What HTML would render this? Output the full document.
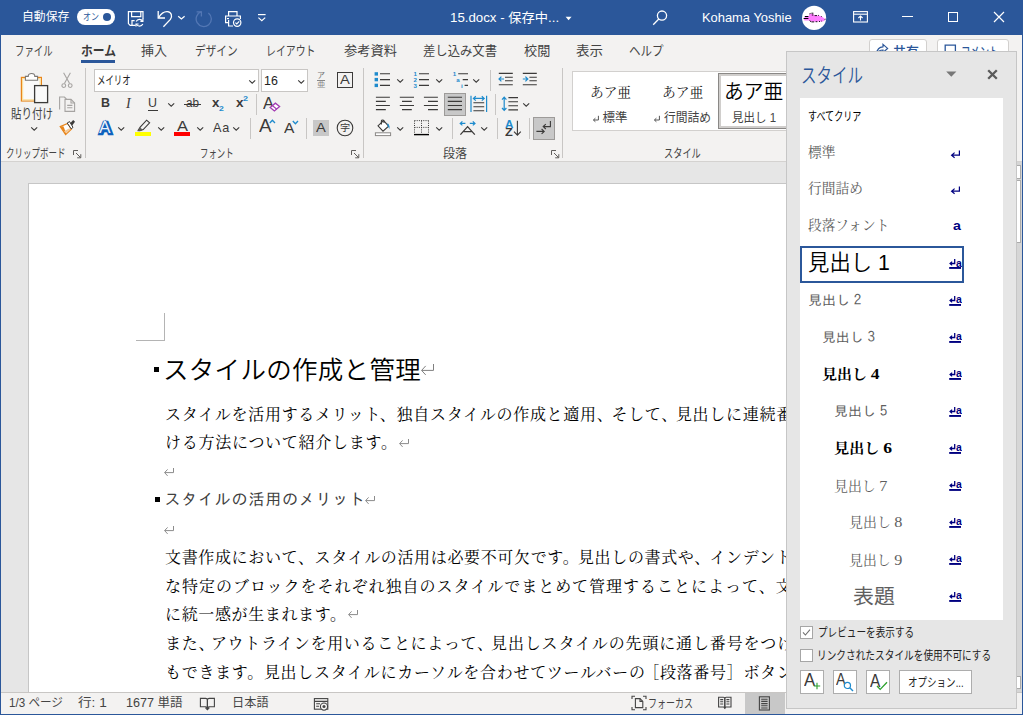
<!DOCTYPE html>
<html lang="ja"><head><meta charset="utf-8"><title>15.docx - Word</title><style>

html,body{margin:0;padding:0;}
body{width:1023px;height:715px;overflow:hidden;position:relative;background:#e6e6e6;font-family:'Liberation Sans','Noto Sans CJK JP',sans-serif;}
.a{position:absolute;display:block;}
.t{position:absolute;white-space:nowrap;transform-origin:0 50%;display:block;}
.dl{position:absolute;white-space:nowrap;display:block;}

</style></head><body>
<div class="a" style="left:0px;top:0px;width:1023px;height:35px;background:#2b579a;"></div>
<div class="a" style="left:0px;top:35px;width:1023px;height:127px;background:#f3f2f1;"></div>
<div class="a" style="left:0px;top:161px;width:1023px;height:1px;background:#d4d2d0;"></div>
<div class="a" style="left:0px;top:162px;width:1023px;height:530px;background:#e6e6e6;"></div>
<span class="t" style="left:22.1px;top:8.0px;height:18px;line-height:18px;font-size:12px;color:#fff;transform:scaleX(0.987);">自動保存</span>
<div class="a" style="left:77px;top:9px;width:38px;height:16px;background:#fff;border-radius:8px;"></div>
<span class="t" style="left:82.5px;top:10.0px;height:14px;line-height:14px;font-size:9.5px;color:#2b579a;transform:scaleX(0.841);">オン</span>
<div class="a" style="left:103px;top:13px;width:8px;height:8px;background:#2b579a;border-radius:50%;"></div>
<svg class="a" style="left:127px;top:10px;" width="18" height="17" viewBox="0 0 18 17"><g fill="none" stroke="#fff" stroke-width="1.2"><path d="M8.5 15.4H3.2L1.4 13.6V1.6H16V9"/><path d="M4.6 1.6V6.6H13.8V1.6"/><path d="M5 15.4V10.6H7.6"/><path d="M15.6 11.2A3.6 3.6 0 0 0 9.2 11.4M9.4 14.2A3.6 3.6 0 0 0 15.8 14"/><path d="M15.9 8.8V11.4H13.4M9 16.6V14H11.6"/></g></svg>
<svg class="a" style="left:156px;top:9px;" width="18" height="19" viewBox="0 0 18 19"><g fill="none" stroke="#fff" stroke-width="1.3"><path d="M2.2 2V9H9"/><path d="M2.6 8.6C5 4.6 8.4 2.4 11.4 2.6C15.6 3 16.6 7.4 14.4 10.4L7.4 17.8"/></g></svg>
<svg class="a" style="left:177px;top:15px;" width="9" height="5" viewBox="0 0 9 5"><path d="M1.2 1.2L4.4 4L7.6 1.2" fill="none" stroke="#fff" stroke-width="1.2"/></svg>
<svg class="a" style="left:195px;top:9px;" width="19" height="19" viewBox="0 0 19 19"><g fill="none" stroke="#5377b4" stroke-width="1.3"><path d="M6.35 2.7A7.6 7.6 0 1 0 13.4 3.9"/><path d="M1.6 2.8H6.4V7.6"/></g></svg>
<svg class="a" style="left:224px;top:10px;" width="19" height="18" viewBox="0 0 19 18"><g fill="none" stroke="#fff" stroke-width="1.2"><path d="M4.6 6V1.6H13V6"/><path d="M4.6 12.6H1.6V6H16.4V9"/><path d="M4.6 10V16H9"/><circle cx="13.2" cy="12.6" r="3.7"/><path d="M11.4 12.6L12.8 14L15.2 11.4"/></g><rect x="3" y="8" width="2" height="1.2" fill="#fff"/></svg>
<svg class="a" style="left:257px;top:13px;" width="10" height="9" viewBox="0 0 10 9"><path d="M1 1.6H8.6" stroke="#fff" stroke-width="1.2"/><path d="M1.4 4.6L4.8 7.6L8.2 4.6" fill="none" stroke="#fff" stroke-width="1.2"/></svg>
<span class="t" style="left:450.1px;top:8.0px;height:20px;line-height:20px;font-size:13px;color:#fff;transform:scaleX(1.021);">15.docx  -  保存中...</span>
<svg class="a" style="left:565px;top:16px;" width="8" height="5" viewBox="0 0 8 5"><path d="M0.6 0.8H6.6L3.6 4.2Z" fill="#fff"/></svg>
<svg class="a" style="left:652px;top:9px;" width="17" height="17" viewBox="0 0 17 17"><g fill="none" stroke="#fff" stroke-width="1.3"><circle cx="10" cy="6.6" r="4.6"/><path d="M6.8 10L1.2 15.8"/></g></svg>
<span class="t" style="left:701.9px;top:8.0px;height:20px;line-height:20px;font-size:13px;color:#fff;transform:scaleX(0.992);">Kohama Yoshie</span>
<svg class="a" style="left:801px;top:5px;" width="26" height="26" viewBox="0 0 26 26"><circle cx="13.1" cy="12.9" r="12.1" fill="#fff"/><path d="M2.8 14L4 11.4L7.6 11.2L8.6 9L12 8.6L13 10L20 11L24.6 14.2L22 16.4L10 16.8L8 15.6L3.4 15.6Z" fill="#ff80ff"/><path d="M3.8 11.5H7.4M2.6 13.5H7.4" stroke="#000" stroke-width="1.1"/><path d="M8.4 8.9L9.6 8.4M10.4 8.2H12.4M10.8 10H12.4M13.6 10.6H16M17 10.3L17.8 10.5M20 11L20.6 11.6M8.6 15.6L10 16.7M10.4 16.9H13.2M14.6 16.7H16.4M18 16.5H19M20 16.1H20.6M23.6 14.7L24.6 14.1" stroke="#000" stroke-width="0.9" fill="none"/></svg>
<svg class="a" style="left:853px;top:11px;" width="15" height="12" viewBox="0 0 15 12"><g fill="none" stroke="#fff" stroke-width="1.1"><rect x="0.6" y="0.6" width="13.8" height="10.4"/><path d="M0.6 3.2H14.4"/><path d="M7.5 9.6V5.2M5.4 7L7.5 5L9.6 7"/></g></svg>
<div class="a" style="left:902px;top:16px;width:10.5px;height:1.2px;background:#fff;"></div>
<div class="a" style="left:948px;top:12px;width:10px;height:10px;border:1.2px solid #fff;box-sizing:border-box;"></div>
<svg class="a" style="left:993px;top:11px;" width="12" height="12" viewBox="0 0 12 12"><path d="M1 1L11 11M11 1L1 11" stroke="#fff" stroke-width="1.2" fill="none"/></svg>
<span class="t" style="left:14.5px;top:41.0px;height:20px;line-height:20px;font-size:13px;color:#444;transform:scaleX(0.723);">ファイル</span>
<span class="t" style="left:80.5px;top:41.0px;height:20px;line-height:20px;font-size:13px;font-weight:700;color:#3b3a39;transform:scaleX(0.906);">ホーム</span>
<div class="a" style="left:81px;top:60px;width:34px;height:3px;background:#2b579a;"></div>
<span class="t" style="left:141.1px;top:41.0px;height:20px;line-height:20px;font-size:13px;color:#444;">挿入</span>
<span class="t" style="left:194.5px;top:41.0px;height:20px;line-height:20px;font-size:13px;color:#444;transform:scaleX(0.819);">デザイン</span>
<span class="t" style="left:266.1px;top:41.0px;height:20px;line-height:20px;font-size:13px;color:#444;transform:scaleX(0.760);">レイアウト</span>
<span class="t" style="left:343.5px;top:41.0px;height:20px;line-height:20px;font-size:13px;color:#444;transform:scaleX(1.019);">参考資料</span>
<span class="t" style="left:422.5px;top:41.0px;height:20px;line-height:20px;font-size:13px;color:#444;transform:scaleX(0.949);">差し込み文書</span>
<span class="t" style="left:523.5px;top:41.0px;height:20px;line-height:20px;font-size:13px;color:#444;transform:scaleX(1.011);">校閲</span>
<span class="t" style="left:576.1px;top:41.0px;height:20px;line-height:20px;font-size:13px;color:#444;transform:scaleX(1.038);">表示</span>
<span class="t" style="left:628.5px;top:41.0px;height:20px;line-height:20px;font-size:13px;color:#444;transform:scaleX(0.887);">ヘルプ</span>
<div class="a" style="left:869px;top:38.5px;width:58px;height:24px;background:#fff;border:1px solid #d2d0ce;border-radius:3px;box-sizing:border-box;"></div>
<svg class="a" style="left:875px;top:43px;" width="14" height="14" viewBox="0 0 14 14"><g fill="none" stroke="#2b579a" stroke-width="1.2"><path d="M8 1.4L12.6 5.4L8 9.4V7C5 7 3 8.2 1.6 10.6C2 6.6 4.4 4 8 3.8Z"/></g></svg>
<span class="t" style="left:892.5px;top:41.5px;height:20px;line-height:20px;font-size:13px;font-weight:500;color:#2b579a;transform:scaleX(0.992);">共有</span>
<div class="a" style="left:937px;top:38.5px;width:72px;height:24px;background:#fff;border:1px solid #d2d0ce;border-radius:3px;box-sizing:border-box;"></div>
<svg class="a" style="left:944px;top:44px;" width="13" height="13" viewBox="0 0 13 13"><path d="M1.2 1.2H11.4V9H5L2.6 11.2V9H1.2Z" fill="none" stroke="#2b579a" stroke-width="1.3"/></svg>
<span class="t" style="left:961.2px;top:41.5px;height:20px;line-height:20px;font-size:13px;font-weight:500;color:#2b579a;transform:scaleX(0.717);">コメント</span>
<svg class="a" style="left:20px;top:72px;" width="29" height="32" viewBox="0 0 29 32"><rect x="1.4" y="5.4" width="20" height="23.6" fill="#fafafa" stroke="#e8861c" stroke-width="1.2"/>
<rect x="2.6" y="6.6" width="17.6" height="21.2" fill="none" stroke="#fbe0a0" stroke-width="1.2"/>
<path d="M5.4 8.2V4.4H8.2C8.2 0.6 14.8 0.6 14.8 4.4H17.6V8.2Z" fill="#fff" stroke="#7a7876" stroke-width="1.1"/>
<rect x="14.6" y="13.6" width="13" height="17" fill="#fafafa" stroke="#3b3a39" stroke-width="1.3"/></svg>
<span class="t" style="left:11.0px;top:103.5px;height:20px;line-height:20px;font-size:13px;color:#444;transform:scaleX(0.809);">貼り付け</span>
<svg class="a" style="left:30px;top:126px;" width="9" height="6" viewBox="0 0 9 6"><path d="M1.2 1.4L4.2 4.2L7.2 1.4" fill="none" stroke="#3b3a39" stroke-width="1.1"/></svg>
<svg class="a" style="left:61px;top:72px;" width="12" height="17" viewBox="0 0 12 17"><g fill="none" stroke="#a6a4a2" stroke-width="1.1"><path d="M2.6 0.8L8.6 11.6M9.4 0.8L3.4 11.6"/><circle cx="2.8" cy="13.6" r="1.9"/><circle cx="9.2" cy="13.6" r="1.9"/></g></svg>
<svg class="a" style="left:58px;top:96px;" width="18" height="17" viewBox="0 0 18 17"><g fill="#f3f2f1" stroke="#a6a4a2" stroke-width="1.1"><path d="M1.6 13.6V1H6.4L8.4 3"/><path d="M7 3.4H13L16.6 7V15.4H7Z"/><path d="M13 3.4V7H16.6" fill="none"/><path d="M9.2 9.4H14.4M9.2 11.8H14.4" fill="none"/></g></svg>
<svg class="a" style="left:59px;top:119px;" width="17" height="17" viewBox="0 0 17 17"><path d="M1.2 7.6L8.6 4.4L12.4 10.2L6.6 15.6Z" fill="#fff" stroke="#e8861c" stroke-width="1.2"/><path d="M1.2 7.6L4.4 7.2L7.4 14.8L6.6 15.6Z" fill="#e8861c"/><path d="M5 12.2L10.4 9.2L11.2 10.6L7.2 14.2Z" fill="#f3c896"/>
<path d="M8.2 4L10.6 2.6L14 8.4L12.2 9.8Z" fill="#fff" stroke="#3b3a39" stroke-width="1"/><path d="M11.2 4.2L14.2 1L16 2.8L13.2 6.6Z" fill="#3b3a39"/></svg>
<span class="t" style="left:5.5px;top:145.0px;height:18px;line-height:18px;font-size:12px;color:#444;transform:scaleX(0.709);">クリップボード</span>
<svg class="a" style="left:73px;top:149.5px;" width="9" height="9" viewBox="0 0 9 9"><g fill="none" stroke="#605e5c" stroke-width="1"><path d="M0.5 5V0.5H5"/><path d="M3 3L7.6 7.6M7.8 4.2V7.8H4.2"/></g></svg>
<div class="a" style="left:85px;top:68px;width:1px;height:90px;background:#c8c6c4;"></div>
<div class="a" style="left:94px;top:69px;width:165px;height:23px;background:#fff;border:1px solid #c8c6c4;box-sizing:border-box;"></div>
<span class="t" style="left:97.0px;top:71.5px;height:18px;line-height:18px;font-size:12px;color:#222;transform:scaleX(0.698);">メイリオ</span>
<svg class="a" style="left:248px;top:79px;" width="9" height="6" viewBox="0 0 9 6"><path d="M1.2 1.4L4.2 4.2L7.2 1.4" fill="none" stroke="#3b3a39" stroke-width="1.1"/></svg>
<div class="a" style="left:261px;top:69px;width:47px;height:23px;background:#fff;border:1px solid #c8c6c4;box-sizing:border-box;"></div>
<span class="t" style="left:264.3px;top:70.5px;height:20px;line-height:20px;font-size:13px;color:#222;transform:scaleX(0.954);">16</span>
<svg class="a" style="left:297px;top:79px;" width="9" height="6" viewBox="0 0 9 6"><path d="M1.2 1.4L4.2 4.2L7.2 1.4" fill="none" stroke="#3b3a39" stroke-width="1.1"/></svg>
<span class="t" style="left:317.0px;top:70.5px;height:10px;line-height:10px;font-size:8px;color:#777;">ア</span>
<div class="a" style="left:317px;top:80.2px;width:8px;height:1px;background:#888;"></div>
<span class="t" style="left:316.8px;top:79.6px;height:10px;line-height:10px;font-size:8px;color:#888;transform:scaleX(1.050);">亜</span>
<div class="a" style="left:337px;top:72px;width:16px;height:16px;border:1.2px solid #3b3a39;box-sizing:border-box;"></div>
<span class="t" style="left:340.1px;top:70.2px;height:20px;line-height:20px;font-size:13px;color:#3b3a39;transform:scaleX(1.130);">A</span>
<span class="t" style="left:100.5px;top:93.0px;height:20px;line-height:20px;font-size:13.5px;font-weight:700;color:#3b3a39;transform:scaleX(0.923);">B</span>
<span class="t" style="left:126.0px;top:92.5px;height:21px;line-height:21px;font-size:14px;font-family:'Liberation Serif',serif;color:#3b3a39;font-style:italic;">I</span>
<span class="t" style="left:148.0px;top:92.6px;height:20px;line-height:20px;font-size:13px;color:#3b3a39;transform:scaleX(0.958);">U</span>
<div class="a" style="left:148px;top:109.6px;width:9.5px;height:1.1px;background:#3b3a39;"></div>
<svg class="a" style="left:167px;top:102px;" width="9" height="6" viewBox="0 0 9 6"><path d="M1.2 1.4L4.2 4.2L7.2 1.4" fill="none" stroke="#3b3a39" stroke-width="1.1"/></svg>
<span class="t" style="left:185.5px;top:93.9px;height:19px;line-height:19px;font-size:12.5px;color:#3b3a39;transform:scaleX(0.935);">ab</span>
<div class="a" style="left:184px;top:104px;width:16.5px;height:1px;background:#3b3a39;"></div>
<span class="t" style="left:212.1px;top:93.4px;height:20px;line-height:20px;font-size:13.5px;font-weight:700;color:#3b3a39;transform:scaleX(0.985);">x</span>
<span class="t" style="left:219.1px;top:103.9px;height:9px;line-height:9px;font-size:7.5px;font-weight:700;color:#1e8bcd;transform:scaleX(1.151);">2</span>
<span class="t" style="left:236.0px;top:93.4px;height:20px;line-height:20px;font-size:13.5px;font-weight:700;color:#3b3a39;">x</span>
<span class="t" style="left:242.9px;top:94.1px;height:9px;line-height:9px;font-size:7.5px;font-weight:700;color:#1e8bcd;transform:scaleX(1.199);">2</span>
<div class="a" style="left:255.6px;top:94px;width:1px;height:21px;background:#c8c6c4;"></div>
<span class="t" style="left:262.5px;top:91.6px;height:24px;line-height:24px;font-size:16px;color:#3b3a39;transform:scaleX(1.031);">A</span>
<svg class="a" style="left:269px;top:102px;" width="12" height="10" viewBox="0 0 12 10"><path d="M1.2 5.6L6.4 1.2L10.6 4.6L5.4 9Z" fill="#fff" stroke="#a33bb3" stroke-width="1.3"/><path d="M3.6 3.8L7.8 7.2" stroke="#a33bb3" stroke-width="1.1"/></svg>
<span class="t" style="left:98.5px;top:115.5px;height:25px;line-height:25px;font-size:16.5px;font-weight:700;color:#0f62bd;transform:scaleX(1.099);-webkit-text-stroke:2.6px #0f62bd;text-shadow:0 0 1.5px #6db3f2;">A</span>
<span class="t" style="left:99.3px;top:115.6px;height:24px;line-height:24px;font-size:16px;color:#fff;transform:scaleX(1.078);opacity:.92;">A</span>
<svg class="a" style="left:117px;top:126px;" width="9" height="6" viewBox="0 0 9 6"><path d="M1.2 1.4L4.2 4.2L7.2 1.4" fill="none" stroke="#3b3a39" stroke-width="1.1"/></svg>
<svg class="a" style="left:135px;top:119px;" width="17" height="13" viewBox="0 0 17 13"><path d="M3.2 11.4L5.2 8.2L11.6 1.2L14.6 3.8L8.2 10.6L5 11.8Z" fill="none" stroke="#3b3a39" stroke-width="1.1"/><path d="M2.4 12.2L5 8.4L8 10.8L4.4 12.2Z" fill="#605e5c"/></svg>
<div class="a" style="left:135px;top:132.3px;width:16px;height:3.6px;background:#ffff00;"></div>
<svg class="a" style="left:157px;top:126px;" width="9" height="6" viewBox="0 0 9 6"><path d="M1.2 1.4L4.2 4.2L7.2 1.4" fill="none" stroke="#3b3a39" stroke-width="1.1"/></svg>
<span class="t" style="left:176.5px;top:114.6px;height:22px;line-height:22px;font-size:14.5px;color:#3b3a39;transform:scaleX(1.137);">A</span>
<div class="a" style="left:174px;top:132.3px;width:16px;height:3.6px;background:#ff0000;"></div>
<svg class="a" style="left:196px;top:126px;" width="9" height="6" viewBox="0 0 9 6"><path d="M1.2 1.4L4.2 4.2L7.2 1.4" fill="none" stroke="#3b3a39" stroke-width="1.1"/></svg>
<span class="t" style="left:213.2px;top:118.0px;height:20px;line-height:20px;font-size:13.5px;color:#3b3a39;transform:scaleX(0.934);letter-spacing:1px;">Aa</span>
<svg class="a" style="left:232px;top:126px;" width="9" height="6" viewBox="0 0 9 6"><path d="M1.2 1.4L4.2 4.2L7.2 1.4" fill="none" stroke="#3b3a39" stroke-width="1.1"/></svg>
<div class="a" style="left:250.4px;top:118px;width:1px;height:21px;background:#c8c6c4;"></div>
<span class="t" style="left:258.5px;top:112.9px;height:27px;line-height:27px;font-size:18px;color:#3b3a39;transform:scaleX(1.049);">A</span>
<svg class="a" style="left:269px;top:119px;" width="7" height="5" viewBox="0 0 7 5"><path d="M0.8 4L3.4 1.2L6 4" fill="none" stroke="#1e8bcd" stroke-width="1.3"/></svg>
<span class="t" style="left:284.1px;top:116.6px;height:22px;line-height:22px;font-size:15px;color:#3b3a39;transform:scaleX(1.038);">A</span>
<svg class="a" style="left:292px;top:120px;" width="7" height="5" viewBox="0 0 7 5"><path d="M0.8 1L3.4 3.8L6 1" fill="none" stroke="#1e8bcd" stroke-width="1.3"/></svg>
<div class="a" style="left:305.5px;top:118px;width:1px;height:21px;background:#c8c6c4;"></div>
<div class="a" style="left:313px;top:120px;width:16px;height:16px;background:#c8c8c8;"></div>
<span class="t" style="left:316.1px;top:118.4px;height:20px;line-height:20px;font-size:13px;color:#3b3a39;transform:scaleX(1.130);">A</span>
<svg class="a" style="left:336px;top:119px;" width="18" height="18" viewBox="0 0 18 18"><circle cx="9" cy="9" r="7.8" fill="none" stroke="#3b3a39" stroke-width="1.1"/></svg>
<span class="t" style="left:339.9px;top:122.0px;height:12px;line-height:12px;font-size:9.5px;color:#3b3a39;transform:scaleX(1.072);">字</span>
<span class="t" style="left:199.9px;top:145.0px;height:18px;line-height:18px;font-size:12px;color:#444;transform:scaleX(0.700);">フォント</span>
<svg class="a" style="left:351px;top:149.5px;" width="9" height="9" viewBox="0 0 9 9"><g fill="none" stroke="#605e5c" stroke-width="1"><path d="M0.5 5V0.5H5"/><path d="M3 3L7.6 7.6M7.8 4.2V7.8H4.2"/></g></svg>
<div class="a" style="left:363px;top:68px;width:1px;height:90px;background:#c8c6c4;"></div>
<svg class="a" style="left:374px;top:72px;" width="17" height="16" viewBox="0 0 17 16"><path d="M6 1.8H16M6 7.6H16M6 13.4H16" stroke="#3b3a39" stroke-width="1.1"/><rect x="0.6" y="0.2" width="3.4" height="3.4" fill="#1e8bcd"/><rect x="0.6" y="5.9" width="3.4" height="3.4" fill="#1e8bcd"/><rect x="0.6" y="11.7" width="3.4" height="3.4" fill="#1e8bcd"/></svg>
<svg class="a" style="left:396px;top:78px;" width="9" height="6" viewBox="0 0 9 6"><path d="M1.2 1.4L4.2 4.2L7.2 1.4" fill="none" stroke="#3b3a39" stroke-width="1.1"/></svg>
<svg class="a" style="left:413px;top:71px;" width="17" height="18" viewBox="0 0 17 18"><path d="M6 2.8H16M6 8.6H16M6 14.4H16" stroke="#3b3a39" stroke-width="1.1"/><g font-family="Liberation Sans,sans-serif" font-weight="700" font-size="6.2" fill="#1e8bcd"><text x="0.6" y="5">1</text><text x="0.6" y="10.9">2</text><text x="0.6" y="16.8">3</text></g></svg>
<svg class="a" style="left:435px;top:78px;" width="9" height="6" viewBox="0 0 9 6"><path d="M1.2 1.4L4.2 4.2L7.2 1.4" fill="none" stroke="#3b3a39" stroke-width="1.1"/></svg>
<svg class="a" style="left:452px;top:71px;" width="17" height="18" viewBox="0 0 17 18"><path d="M6.2 2.8H16M10.7 8.6H16M12.6 14.4H16" stroke="#3b3a39" stroke-width="1.1"/><g font-family="Liberation Sans,sans-serif" font-weight="700" font-size="6.2" fill="#1e8bcd"><text x="0.8" y="5">1</text><text x="4.2" y="10.8">a</text><text x="9" y="16.8">i</text></g></svg>
<svg class="a" style="left:472px;top:78px;" width="9" height="6" viewBox="0 0 9 6"><path d="M1.2 1.4L4.2 4.2L7.2 1.4" fill="none" stroke="#3b3a39" stroke-width="1.1"/></svg>
<div class="a" style="left:490.3px;top:70px;width:1px;height:21px;background:#c8c6c4;"></div>
<svg class="a" style="left:498px;top:72px;" width="16" height="15" viewBox="0 0 16 15"><path d="M0.8 1.4H14.8M7 5.2H14.8M7 8.8H14.8M0.8 12.8H14.8" stroke="#3b3a39" stroke-width="1.1"/><path d="M6 7H1.2M3.4 4.6L1 7L3.4 9.4" fill="none" stroke="#1e8bcd" stroke-width="1.2"/></svg>
<svg class="a" style="left:522px;top:72px;" width="16" height="15" viewBox="0 0 16 15"><path d="M0.8 1.4H14.8M7.4 5.2H14.8M7.4 8.8H14.8M0.8 12.8H14.8" stroke="#3b3a39" stroke-width="1.1"/><path d="M0.8 7H5.6M3.4 4.6L5.8 7L3.4 9.4" fill="none" stroke="#1e8bcd" stroke-width="1.2"/></svg>
<svg class="a" style="left:375px;top:96px;" width="16" height="15" viewBox="0 0 16 15"><path d="M0.9 1.2H14.9M0.9 5.4H10.8M0.9 9.5H14.9M0.9 13.6H10.8" stroke="#3b3a39" stroke-width="1.1"/></svg>
<svg class="a" style="left:399px;top:96px;" width="16" height="15" viewBox="0 0 16 15"><path d="M0.8 1.2H15M3 5.4H12.8M0.8 9.5H15M3 13.6H12.8" stroke="#3b3a39" stroke-width="1.1"/></svg>
<svg class="a" style="left:423px;top:96px;" width="16" height="15" viewBox="0 0 16 15"><path d="M0.9 1.2H14.9M5 5.4H14.9M0.9 9.5H14.9M5 13.6H14.9" stroke="#3b3a39" stroke-width="1.1"/></svg>
<div class="a" style="left:444px;top:93px;width:22px;height:23px;background:#c8c8c8;border:1px solid #9d9b99;box-sizing:border-box;"></div>
<svg class="a" style="left:447px;top:96px;" width="16" height="15" viewBox="0 0 16 15"><path d="M0.8 1.2H15M0.8 5.4H15M0.8 9.5H15M0.8 13.6H15" stroke="#3b3a39" stroke-width="1.1"/></svg>
<svg class="a" style="left:470px;top:95px;" width="18" height="18" viewBox="0 0 18 18"><path d="M1 0.8V17M16.6 0.8V17" stroke="#1e8bcd" stroke-width="1.2"/><path d="M3.6 3.4H14M5.8 1.2L3.4 3.4L5.8 5.6M11.8 1.2L14.2 3.4L11.8 5.6" fill="none" stroke="#1e8bcd" stroke-width="1.2"/><path d="M3.4 7.8H14.2M3.4 11.8H14.2M3.4 15.8H14.2" stroke="#3b3a39" stroke-width="1.1"/></svg>
<div class="a" style="left:494.5px;top:94px;width:1px;height:21px;background:#c8c6c4;"></div>
<svg class="a" style="left:501px;top:96px;" width="18" height="16" viewBox="0 0 18 16"><path d="M7.4 1.6H17M7.4 5.7H17M7.4 9.8H17M7.4 13.9H17" stroke="#3b3a39" stroke-width="1.1"/><path d="M3.2 1.4V14.2M1 3.6L3.2 1.2L5.4 3.6M1 12L3.2 14.4L5.4 12" fill="none" stroke="#1e8bcd" stroke-width="1.2"/></svg>
<svg class="a" style="left:522px;top:102px;" width="9" height="6" viewBox="0 0 9 6"><path d="M1.2 1.4L4.2 4.2L7.2 1.4" fill="none" stroke="#3b3a39" stroke-width="1.1"/></svg>
<svg class="a" style="left:374px;top:119px;" width="18" height="18" viewBox="0 0 18 18"><path d="M4 6.8L9.6 1.6L14.6 7.2L9 12.2Z" fill="#fff" stroke="#3b3a39" stroke-width="1.1"/><path d="M7.4 5.4V2.2C7.4 0.6 10 0.6 10 2.2V4" fill="none" stroke="#3b3a39" stroke-width="1.1"/><path d="M13.4 4.2C15.2 5 15.8 7.2 15.4 10C14.6 8.6 14.2 7.8 13.6 7Z" fill="#1e8bcd"/><rect x="1.4" y="13.8" width="15.2" height="2.8" fill="#fff" stroke="#8a8886" stroke-width="1"/></svg>
<svg class="a" style="left:396px;top:126px;" width="9" height="6" viewBox="0 0 9 6"><path d="M1.2 1.4L4.2 4.2L7.2 1.4" fill="none" stroke="#3b3a39" stroke-width="1.1"/></svg>
<svg class="a" style="left:413px;top:119px;" width="17" height="17" viewBox="0 0 17 17"><path d="M1.5 1.6H15.5M1.5 8.4H15.5M1.5 1.6V14M8.5 1.6V14M15.5 1.6V14" fill="none" stroke="#3b3a39" stroke-width="1" stroke-dasharray="1 1.2"/><path d="M1 15.6H16" stroke="#000" stroke-width="1.4"/></svg>
<svg class="a" style="left:435px;top:126px;" width="9" height="6" viewBox="0 0 9 6"><path d="M1.2 1.4L4.2 4.2L7.2 1.4" fill="none" stroke="#3b3a39" stroke-width="1.1"/></svg>
<div class="a" style="left:452.3px;top:118px;width:1px;height:21px;background:#c8c6c4;"></div>
<svg class="a" style="left:459px;top:120px;" width="18" height="16" viewBox="0 0 18 16"><path d="M1.4 14.6L8.6 6.6L15.8 14.6M4.6 11.6H12.6" fill="none" stroke="#3b3a39" stroke-width="1.3"/><path d="M6.4 3.4H1.4M3.4 1.4L1.2 3.4L3.4 5.4M10.8 3.4H15.8M13.8 1.4L16 3.4L13.8 5.4" fill="none" stroke="#1e8bcd" stroke-width="1.2"/></svg>
<svg class="a" style="left:480px;top:126px;" width="9" height="6" viewBox="0 0 9 6"><path d="M1.2 1.4L4.2 4.2L7.2 1.4" fill="none" stroke="#3b3a39" stroke-width="1.1"/></svg>
<div class="a" style="left:497.4px;top:118px;width:1px;height:21px;background:#c8c6c4;"></div>
<span class="t" style="left:504.5px;top:117.8px;height:12px;line-height:12px;font-size:10.5px;font-weight:700;color:#1e8bcd;transform:scaleX(1.106);">A</span>
<span class="t" style="left:504.5px;top:126.2px;height:12px;line-height:12px;font-size:10.5px;font-weight:700;color:#3b3a39;transform:scaleX(1.215);">Z</span>
<svg class="a" style="left:513px;top:120px;" width="9" height="17" viewBox="0 0 9 17"><path d="M4.4 0.8V15M1 11.6L4.4 15.2L7.8 11.6" fill="none" stroke="#3b3a39" stroke-width="1.1"/></svg>
<div class="a" style="left:528.5px;top:118px;width:1px;height:21px;background:#c8c6c4;"></div>
<div class="a" style="left:533px;top:117px;width:22px;height:23px;background:#c8c8c8;border:1px solid #9d9b99;box-sizing:border-box;"></div>
<svg class="a" style="left:535px;top:119px;" width="18" height="19" viewBox="0 0 18 19"><g fill="none" stroke="#3b3a39" stroke-width="1.1"><path d="M15.4 2V7.6H8.4M10.8 5.2L8.2 7.6L10.8 10"/><path d="M1.4 12.4H9M6.6 10L9.2 12.4L6.6 14.8"/></g></svg>
<span class="t" style="left:442.9px;top:145.0px;height:18px;line-height:18px;font-size:12px;color:#444;">段落</span>
<svg class="a" style="left:550.5px;top:149.5px;" width="9" height="9" viewBox="0 0 9 9"><g fill="none" stroke="#605e5c" stroke-width="1"><path d="M0.5 5V0.5H5"/><path d="M3 3L7.6 7.6M7.8 4.2V7.8H4.2"/></g></svg>
<div class="a" style="left:562px;top:68px;width:1px;height:90px;background:#c8c6c4;"></div>
<div class="a" style="left:572px;top:71px;width:430px;height:60px;background:#fff;border:1px solid #d2d0ce;box-sizing:border-box;"></div>
<span class="t" style="left:590.2px;top:82.6px;height:20px;line-height:20px;font-size:13.3px;font-family:'Liberation Serif','Noto Serif CJK JP','Noto Serif CJK SC',serif;color:#222;transform:scaleX(1.028);">あア亜</span>
<svg class="a" style="left:592px;top:115px;" width="8" height="8" viewBox="0 0 8 8"><path d="M6.4 0.8V5H1.6M3.4 3.2L1.4 5L3.4 6.8" fill="none" stroke="#555" stroke-width="1"/></svg>
<span class="t" style="left:602.5px;top:108.9px;height:19px;line-height:19px;font-size:12.5px;color:#444;">標準</span>
<span class="t" style="left:661.9px;top:82.6px;height:20px;line-height:20px;font-size:13.3px;font-family:'Liberation Serif','Noto Serif CJK JP','Noto Serif CJK SC',serif;color:#222;transform:scaleX(1.033);">あア亜</span>
<svg class="a" style="left:653px;top:115px;" width="8" height="8" viewBox="0 0 8 8"><path d="M6.4 0.8V5H1.6M3.4 3.2L1.4 5L3.4 6.8" fill="none" stroke="#555" stroke-width="1"/></svg>
<span class="t" style="left:663.5px;top:108.9px;height:19px;line-height:19px;font-size:12.5px;color:#444;transform:scaleX(0.940);">行間詰め</span>
<div class="a" style="left:718px;top:73px;width:90px;height:56px;background:#fff;border:1px solid #8a8886;box-sizing:border-box;box-shadow:inset 0 0 0 2px #d0cecc;"></div>
<span class="t" style="left:724.4px;top:77.3px;height:30px;line-height:30px;font-size:20px;font-weight:350;color:#000;transform:scaleX(0.988);">あア亜</span>
<span class="t" style="left:731.9px;top:108.7px;height:19px;line-height:19px;font-size:12.5px;color:#444;transform:scaleX(0.920);">見出し 1</span>
<span class="t" style="left:663.5px;top:145.0px;height:18px;line-height:18px;font-size:12px;color:#444;transform:scaleX(0.766);">スタイル</span>
<div class="a" style="left:28px;top:183px;width:1000px;height:520px;background:#fff;border:1px solid #c6c6c6;box-sizing:border-box;"></div>
<div class="a" style="left:164px;top:313px;width:1px;height:28px;background:#b4b4b4;"></div>
<div class="a" style="left:136px;top:340px;width:29px;height:1px;background:#b4b4b4;"></div>
<div class="a" style="left:154px;top:367px;width:5px;height:5px;background:#000;"></div>
<span class="dl" style="left:163px;top:355.5px;height:28px;line-height:28px;font-size:25.5px;font-family:'Liberation Sans','Noto Sans CJK JP',sans-serif;letter-spacing:0.30px;color:#000;font-weight:350;">スタイルの作成と管理</span>
<svg class="a" style="left:420px;top:363px;" width="15" height="13" viewBox="0 0 15 13"><path d="M13.5 1V7.4H1.8M5.7 2.9L1.6 7.4L5.7 11.9" fill="none" stroke="#808080" stroke-width="1"/></svg>
<span class="dl" style="left:165px;top:400.5px;height:28px;line-height:28px;font-size:16px;font-family:'Liberation Serif','Noto Serif CJK JP','Noto Serif CJK SC',serif;letter-spacing:0.71px;color:#000;">スタイルを活用するメリット、独自スタイルの作成と適用<span style="margin-right:-2.05px">、</span>そして<span style="margin-right:-2.05px">、</span>見出しに連続番号を付</span>
<span class="dl" style="left:165px;top:429.2px;height:28px;line-height:28px;font-size:16px;font-family:'Liberation Serif','Noto Serif CJK JP','Noto Serif CJK SC',serif;letter-spacing:0.74px;color:#000;">ける方法について紹介します。</span>
<svg class="a" style="left:398px;top:438px;" width="12" height="10" viewBox="0 0 12 10"><path d="M10.5 1V5.6H1.8M4.6 2.4L1.6 5.6L4.6 8.9" fill="none" stroke="#8c8c8c" stroke-width="1"/></svg>
<svg class="a" style="left:163px;top:467px;" width="12" height="10" viewBox="0 0 12 10"><path d="M10.5 1V5.6H1.8M4.6 2.4L1.6 5.6L4.6 8.9" fill="none" stroke="#8c8c8c" stroke-width="1"/></svg>
<div class="a" style="left:154.5px;top:497.3px;width:5px;height:5px;background:#000;"></div>
<span class="dl" style="left:164.5px;top:485.8px;height:28px;line-height:28px;font-size:16px;font-family:'Liberation Sans','IPAGothic','Noto Sans CJK JP',sans-serif;letter-spacing:0.78px;color:#404040;">スタイルの活用のメリット</span>
<svg class="a" style="left:364px;top:495px;" width="12" height="10" viewBox="0 0 12 10"><path d="M10.5 1V5.6H1.8M4.6 2.4L1.6 5.6L4.6 8.9" fill="none" stroke="#8c8c8c" stroke-width="1"/></svg>
<svg class="a" style="left:163px;top:525px;" width="12" height="10" viewBox="0 0 12 10"><path d="M10.5 1V5.6H1.8M4.6 2.4L1.6 5.6L4.6 8.9" fill="none" stroke="#8c8c8c" stroke-width="1"/></svg>
<span class="dl" style="left:165px;top:544.0px;height:28px;line-height:28px;font-size:16px;font-family:'Liberation Serif','Noto Serif CJK JP','Noto Serif CJK SC',serif;letter-spacing:0.65px;color:#000;">文書作成において、スタイルの活用は必要不可欠です<span style="margin-right:-1.4px">。</span>見出しの書式や<span style="margin-right:-1.4px">、</span>インデントのよう</span>
<span class="dl" style="left:165px;top:572.7px;height:28px;line-height:28px;font-size:16px;font-family:'Liberation Serif','Noto Serif CJK JP','Noto Serif CJK SC',serif;letter-spacing:0.99px;color:#000;">な特定のブロックをそれぞれ独自のスタイルでまとめて管理することによって、文書全体</span>
<span class="dl" style="left:165px;top:601.4px;height:28px;line-height:28px;font-size:16px;font-family:'Liberation Serif','Noto Serif CJK JP','Noto Serif CJK SC',serif;letter-spacing:0.64px;color:#000;">に統一感が生まれます。</span>
<svg class="a" style="left:347px;top:609px;" width="12" height="10" viewBox="0 0 12 10"><path d="M10.5 1V5.6H1.8M4.6 2.4L1.6 5.6L4.6 8.9" fill="none" stroke="#8c8c8c" stroke-width="1"/></svg>
<span class="dl" style="left:165px;top:630.1px;height:28px;line-height:28px;font-size:16px;font-family:'Liberation Serif','Noto Serif CJK JP','Noto Serif CJK SC',serif;letter-spacing:0.68px;color:#000;">また<span style="margin-right:-4.2px">、</span>アウトラインを用いることによって<span style="margin-right:-2.6px">、</span><span style="letter-spacing:0.85px">見出しスタイルの先頭に通し番号をつけること</span></span>
<span class="dl" style="left:165px;top:658.8px;height:28px;line-height:28px;font-size:16px;font-family:'Liberation Serif','Noto Serif CJK JP','Noto Serif CJK SC',serif;letter-spacing:0.70px;color:#000;">もできます。見出しスタイルにカーソルを合わせてツールバー<span style="margin-right:-2.45px">の</span>［段落番号］ボタンをクリ</span>
<div class="a" style="left:0px;top:692px;width:1023px;height:22px;background:#f3f2f1;"></div>
<div class="a" style="left:0px;top:692px;width:1023px;height:1px;background:#c8c6c4;"></div>
<span class="t" style="left:8.8px;top:694.0px;height:18px;line-height:18px;font-size:12px;color:#444;transform:scaleX(0.968);">1/3 ページ</span>
<span class="t" style="left:77.8px;top:694.0px;height:18px;line-height:18px;font-size:12px;color:#444;transform:scaleX(1.132);">行: 1</span>
<span class="t" style="left:125.5px;top:694.0px;height:18px;line-height:18px;font-size:12px;color:#444;transform:scaleX(1.049);">1677 単語</span>
<svg class="a" style="left:199px;top:697px;" width="17" height="14" viewBox="0 0 17 14"><g fill="none" stroke="#444" stroke-width="1.1"><path d="M1.4 1.4H6.6C7.6 1.4 8.4 2.2 8.4 3.2V11.4L7 9.8H1.4Z"/><path d="M15.4 1.4H10.2C9.2 1.4 8.4 2.2 8.4 3.2V11.4L9.8 9.8H15.4Z"/><path d="M6.4 10.6L8.4 12.8L10.4 10.6"/></g></svg>
<span class="t" style="left:232.2px;top:694.0px;height:18px;line-height:18px;font-size:12px;color:#444;transform:scaleX(1.016);">日本語</span>
<svg class="a" style="left:313px;top:697px;" width="17" height="14" viewBox="0 0 17 14"><g fill="none" stroke="#444" stroke-width="1.1"><rect x="1.4" y="1.6" width="13.4" height="10.6"/><path d="M1.4 4.4H14.8M3.2 6.8H7M3.2 9.2H6"/></g><circle cx="11" cy="9.6" r="3.6" fill="#f3f2f1" stroke="#444" stroke-width="1.1"/><circle cx="11" cy="9.6" r="1.5" fill="#444"/></svg>
<svg class="a" style="left:631px;top:695px;" width="16" height="16" viewBox="0 0 16 16"><g fill="none" stroke="#444" stroke-width="1.1"><path d="M1 4V1.2H4M12 1.2H15V4M15 12V14.8H12M4 14.8H1V12"/><path d="M4.4 3.6H9L11.8 6.4V12.6H4.4Z"/><path d="M9 3.6V6.4H11.8"/></g></svg>
<span class="t" style="left:648.4px;top:694.5px;height:18px;line-height:18px;font-size:12px;color:#444;transform:scaleX(0.750);">フォーカス</span>
<svg class="a" style="left:717px;top:695px;" width="16" height="15" viewBox="0 0 16 15"><g fill="none" stroke="#444" stroke-width="1.1"><path d="M1.6 2.2H6.4C7.2 2.2 7.8 2.8 7.8 3.6V13L6.8 12H1.6Z"/><path d="M14 2.2H9.2C8.4 2.2 7.8 2.8 7.8 3.6V13L8.8 12H14Z"/><path d="M3.2 4.6H6.2M3.2 6.8H6.2M3.2 9H6.2M9.4 4.6H12.4M9.4 6.8H12.4M9.4 9H12.4"/></g></svg>
<div class="a" style="left:745px;top:693px;width:40px;height:21px;background:#c8c8c8;"></div>
<svg class="a" style="left:758px;top:696px;" width="13" height="15" viewBox="0 0 13 15"><g fill="none" stroke="#444" stroke-width="1.1"><rect x="1.4" y="0.8" width="10" height="13.2"/><path d="M3.2 3.2H9.6M3.2 5.4H9.6M3.2 7.6H9.6M3.2 9.8H9.6M3.2 12H9.6"/></g></svg>
<div class="a" style="left:1004px;top:162px;width:18px;height:530px;background:#d6d6d6;"></div>
<div class="a" style="left:1004px;top:165px;width:17px;height:14px;background:#fff;border:1px solid #ababab;box-sizing:border-box;"></div>
<div class="a" style="left:1004px;top:180px;width:17px;height:63px;background:#fff;border:1px solid #ababab;box-sizing:border-box;"></div>
<div class="a" style="left:1004px;top:676px;width:17px;height:13px;background:#fff;border:1px solid #ababab;box-sizing:border-box;"></div>
<div class="a" style="left:786px;top:51px;width:231px;height:658px;background:#e6e6e6;border:1px solid #c6c6c6;box-sizing:border-box;"></div>
<span class="t" style="left:800.5px;top:61.0px;height:30px;line-height:30px;font-size:20px;font-weight:350;color:#2b579a;transform:scaleX(0.775);">スタイル</span>
<svg class="a" style="left:945px;top:70px;" width="13" height="8" viewBox="0 0 13 8"><path d="M1.2 1.4H11.4L6.3 6.8Z" fill="#777"/></svg>
<svg class="a" style="left:986px;top:68px;" width="13" height="13" viewBox="0 0 13 13"><path d="M2.2 2.2L10.8 10.8M10.8 2.2L2.2 10.8" stroke="#5a5a5a" stroke-width="2.3" fill="none"/></svg>
<div class="a" style="left:800px;top:98px;width:203px;height:522px;background:#fff;"></div>
<span class="t" style="left:808.1px;top:107.6px;height:18px;line-height:18px;font-size:12px;color:#000;transform:scaleX(0.755);">すべてクリア</span>
<span class="t" style="left:808.1px;top:142.7px;height:20px;line-height:20px;font-size:13.33px;font-family:'Liberation Serif','Noto Serif CJK JP','Noto Serif CJK SC',serif;color:#5e5e5e;transform:scaleX(1.028);">標準</span>
<svg class="a" style="left:950px;top:149.5px;" width="11" height="9" viewBox="0 0 11 9"><path d="M9.4 0.6V5.2H2M4.6 2.6L1.6 5.2L4.6 7.8" fill="none" stroke="#000080" stroke-width="1.2"/></svg>
<span class="t" style="left:808.1px;top:179.0px;height:20px;line-height:20px;font-size:13.33px;font-family:'Liberation Serif','Noto Serif CJK JP','Noto Serif CJK SC',serif;color:#5e5e5e;transform:scaleX(1.030);">行間詰め</span>
<svg class="a" style="left:950px;top:186px;" width="11" height="9" viewBox="0 0 11 9"><path d="M9.4 0.6V5.2H2M4.6 2.6L1.6 5.2L4.6 7.8" fill="none" stroke="#000080" stroke-width="1.2"/></svg>
<span class="t" style="left:808.1px;top:216.0px;height:20px;line-height:20px;font-size:13.33px;font-family:'Liberation Serif','Noto Serif CJK JP','Noto Serif CJK SC',serif;color:#5e5e5e;transform:scaleX(1.026);">段落フォント</span>
<span class="t" style="left:953.2px;top:216.0px;height:20px;line-height:20px;font-size:13px;font-weight:700;color:#000080;transform:scaleX(1.092);">a</span>
<div class="a" style="left:800px;top:246px;width:164px;height:37px;background:#fff;border:2px solid #2b579a;box-sizing:border-box;"></div>
<span class="t" style="left:808.1px;top:247.0px;height:32px;line-height:32px;font-size:21.3px;font-weight:350;color:#000;">見出し 1</span>
<svg class="a" style="left:949px;top:258px;" width="13" height="12" viewBox="0 0 13 12"><path d="M5.7 1V5.5H1.4" fill="none" stroke="#000080" stroke-width="1.3"/><path d="M0.1 5.5L3.1 2.9V8.1Z" fill="#000080"/><rect x="0.2" y="9" width="11.8" height="1.9" fill="#000080"/></svg>
<span class="t" style="left:955.7px;top:256.6px;height:12px;line-height:12px;font-size:10.5px;font-weight:700;color:#000080;transform:scaleX(0.993);">a</span>
<span class="t" style="left:808.1px;top:290.3px;height:20px;line-height:20px;font-size:13.33px;font-family:'Liberation Sans','IPAGothic','Noto Sans CJK JP',sans-serif;color:#5e5e5e;transform:scaleX(1.048);">見出し <span style="font-family:IPAGothic,sans-serif;font-size:14.5px">2</span></span>
<svg class="a" style="left:949px;top:294.8px;" width="13" height="12" viewBox="0 0 13 12"><path d="M5.7 1V5.5H1.4" fill="none" stroke="#000080" stroke-width="1.3"/><path d="M0.1 5.5L3.1 2.9V8.1Z" fill="#000080"/><rect x="0.2" y="9" width="11.8" height="1.9" fill="#000080"/></svg>
<span class="t" style="left:955.7px;top:293.4px;height:12px;line-height:12px;font-size:10.5px;font-weight:700;color:#000080;transform:scaleX(0.993);">a</span>
<span class="t" style="left:821.8px;top:327.2px;height:20px;line-height:20px;font-size:13.33px;font-family:'Liberation Sans','IPAGothic','Noto Sans CJK JP',sans-serif;color:#5e5e5e;transform:scaleX(1.039);">見出し <span style="font-family:IPAGothic,sans-serif;font-size:14.5px">3</span></span>
<svg class="a" style="left:949px;top:331.8px;" width="13" height="12" viewBox="0 0 13 12"><path d="M5.7 1V5.5H1.4" fill="none" stroke="#000080" stroke-width="1.3"/><path d="M0.1 5.5L3.1 2.9V8.1Z" fill="#000080"/><rect x="0.2" y="9" width="11.8" height="1.9" fill="#000080"/></svg>
<span class="t" style="left:955.7px;top:330.4px;height:12px;line-height:12px;font-size:10.5px;font-weight:700;color:#000080;transform:scaleX(0.993);">a</span>
<span class="t" style="left:821.8px;top:364.2px;height:20px;line-height:20px;font-size:13.33px;font-family:'Liberation Serif','Noto Serif CJK JP','Noto Serif CJK SC',serif;font-weight:700;color:#000;transform:scaleX(1.128);">見出し <span style="font-size:15.5px">4</span></span>
<svg class="a" style="left:949px;top:368.8px;" width="13" height="12" viewBox="0 0 13 12"><path d="M5.7 1V5.5H1.4" fill="none" stroke="#000080" stroke-width="1.3"/><path d="M0.1 5.5L3.1 2.9V8.1Z" fill="#000080"/><rect x="0.2" y="9" width="11.8" height="1.9" fill="#000080"/></svg>
<span class="t" style="left:955.7px;top:367.4px;height:12px;line-height:12px;font-size:10.5px;font-weight:700;color:#000080;transform:scaleX(0.993);">a</span>
<span class="t" style="left:834.3px;top:401.2px;height:20px;line-height:20px;font-size:13.33px;font-family:'Liberation Sans','IPAGothic','Noto Sans CJK JP',sans-serif;color:#5e5e5e;transform:scaleX(1.048);">見出し <span style="font-family:IPAGothic,sans-serif;font-size:14.5px">5</span></span>
<svg class="a" style="left:949px;top:405.8px;" width="13" height="12" viewBox="0 0 13 12"><path d="M5.7 1V5.5H1.4" fill="none" stroke="#000080" stroke-width="1.3"/><path d="M0.1 5.5L3.1 2.9V8.1Z" fill="#000080"/><rect x="0.2" y="9" width="11.8" height="1.9" fill="#000080"/></svg>
<span class="t" style="left:955.7px;top:404.4px;height:12px;line-height:12px;font-size:10.5px;font-weight:700;color:#000080;transform:scaleX(0.993);">a</span>
<span class="t" style="left:834.3px;top:438.3px;height:20px;line-height:20px;font-size:13.33px;font-family:'Liberation Serif','Noto Serif CJK JP','Noto Serif CJK SC',serif;font-weight:700;color:#000;transform:scaleX(1.137);">見出し <span style="font-size:15.5px">6</span></span>
<svg class="a" style="left:949px;top:442.8px;" width="13" height="12" viewBox="0 0 13 12"><path d="M5.7 1V5.5H1.4" fill="none" stroke="#000080" stroke-width="1.3"/><path d="M0.1 5.5L3.1 2.9V8.1Z" fill="#000080"/><rect x="0.2" y="9" width="11.8" height="1.9" fill="#000080"/></svg>
<span class="t" style="left:955.7px;top:441.4px;height:12px;line-height:12px;font-size:10.5px;font-weight:700;color:#000080;transform:scaleX(0.993);">a</span>
<span class="t" style="left:834.3px;top:475.6px;height:20px;line-height:20px;font-size:13.33px;font-family:'Liberation Serif','Noto Serif CJK JP','Noto Serif CJK SC',serif;color:#5e5e5e;transform:scaleX(1.045);">見出し <span style="font-size:15.5px">7</span></span>
<svg class="a" style="left:949px;top:479.8px;" width="13" height="12" viewBox="0 0 13 12"><path d="M5.7 1V5.5H1.4" fill="none" stroke="#000080" stroke-width="1.3"/><path d="M0.1 5.5L3.1 2.9V8.1Z" fill="#000080"/><rect x="0.2" y="9" width="11.8" height="1.9" fill="#000080"/></svg>
<span class="t" style="left:955.7px;top:478.4px;height:12px;line-height:12px;font-size:10.5px;font-weight:700;color:#000080;transform:scaleX(0.993);">a</span>
<span class="t" style="left:848.5px;top:512.3px;height:20px;line-height:20px;font-size:13.33px;font-family:'Liberation Serif','Noto Serif CJK JP','Noto Serif CJK SC',serif;color:#5e5e5e;transform:scaleX(1.047);">見出し <span style="font-size:15.5px">8</span></span>
<svg class="a" style="left:949px;top:516.8px;" width="13" height="12" viewBox="0 0 13 12"><path d="M5.7 1V5.5H1.4" fill="none" stroke="#000080" stroke-width="1.3"/><path d="M0.1 5.5L3.1 2.9V8.1Z" fill="#000080"/><rect x="0.2" y="9" width="11.8" height="1.9" fill="#000080"/></svg>
<span class="t" style="left:955.7px;top:515.4px;height:12px;line-height:12px;font-size:10.5px;font-weight:700;color:#000080;transform:scaleX(0.993);">a</span>
<span class="t" style="left:848.7px;top:550.2px;height:20px;line-height:20px;font-size:13.33px;font-family:'Liberation Serif','Noto Serif CJK JP','Noto Serif CJK SC',serif;color:#5e5e5e;transform:scaleX(1.042);">見出し <span style="font-size:15.5px">9</span></span>
<svg class="a" style="left:949px;top:553.8px;" width="13" height="12" viewBox="0 0 13 12"><path d="M5.7 1V5.5H1.4" fill="none" stroke="#000080" stroke-width="1.3"/><path d="M0.1 5.5L3.1 2.9V8.1Z" fill="#000080"/><rect x="0.2" y="9" width="11.8" height="1.9" fill="#000080"/></svg>
<span class="t" style="left:955.7px;top:552.4px;height:12px;line-height:12px;font-size:10.5px;font-weight:700;color:#000080;transform:scaleX(0.993);">a</span>
<span class="t" style="left:853.0px;top:581.3px;height:32px;line-height:32px;font-size:21.3px;font-family:'Liberation Sans','IPAGothic','Noto Sans CJK JP',sans-serif;color:#5e5e5e;transform:scaleX(0.988);">表題</span>
<svg class="a" style="left:949px;top:590.8px;" width="13" height="12" viewBox="0 0 13 12"><path d="M5.7 1V5.5H1.4" fill="none" stroke="#000080" stroke-width="1.3"/><path d="M0.1 5.5L3.1 2.9V8.1Z" fill="#000080"/><rect x="0.2" y="9" width="11.8" height="1.9" fill="#000080"/></svg>
<span class="t" style="left:955.7px;top:589.4px;height:12px;line-height:12px;font-size:10.5px;font-weight:700;color:#000080;transform:scaleX(0.993);">a</span>
<div class="a" style="left:800px;top:626px;width:13px;height:13px;background:#fff;border:1px solid #a6a6a6;box-sizing:border-box;"></div>
<svg class="a" style="left:801px;top:627px;" width="11" height="11" viewBox="0 0 11 11"><path d="M2 5.4L4.4 8L9 2.6" fill="none" stroke="#707070" stroke-width="1.1"/></svg>
<span class="t" style="left:817.7px;top:623.6px;height:18px;line-height:18px;font-size:12px;color:#222;transform:scaleX(0.802);">プレビューを表示する</span>
<div class="a" style="left:800px;top:649px;width:13px;height:13px;background:#fff;border:1px solid #a6a6a6;box-sizing:border-box;"></div>
<span class="t" style="left:817.2px;top:646.5px;height:18px;line-height:18px;font-size:12px;color:#222;transform:scaleX(0.806);">リンクされたスタイルを使用不可にする</span>
<div class="a" style="left:800px;top:670px;width:24px;height:24px;background:#fff;border:1px solid #adadad;box-sizing:border-box;"></div>
<div class="a" style="left:833px;top:670px;width:24px;height:24px;background:#fff;border:1px solid #adadad;box-sizing:border-box;"></div>
<div class="a" style="left:866px;top:670px;width:24px;height:24px;background:#fff;border:1px solid #adadad;box-sizing:border-box;"></div>
<div class="a" style="left:899px;top:670px;width:73px;height:24px;background:#fff;border:1px solid #adadad;box-sizing:border-box;"></div>
<span class="t" style="left:803.8px;top:667.0px;height:27px;line-height:27px;font-size:18px;color:#3b3a39;transform:scaleX(0.932);">A</span>
<svg class="a" style="left:813px;top:682px;" width="8" height="8" viewBox="0 0 8 8"><path d="M4 0.8V7.2M0.8 4H7.2" stroke="#2ca02c" stroke-width="1.1"/></svg>
<span class="t" style="left:836.3px;top:667.3px;height:26px;line-height:26px;font-size:17px;color:#3b3a39;transform:scaleX(0.846);">A</span>
<svg class="a" style="left:843px;top:681px;" width="11" height="11" viewBox="0 0 11 11"><circle cx="4.4" cy="4.4" r="3.1" fill="#fff" stroke="#1e8bcd" stroke-width="1.2"/><path d="M6.8 6.8L10 10" stroke="#1e8bcd" stroke-width="1.4"/></svg>
<span class="t" style="left:869.8px;top:667.5px;height:26px;line-height:26px;font-size:17.5px;color:#3b3a39;transform:scaleX(0.881);">A</span>
<svg class="a" style="left:876px;top:681px;" width="12" height="10" viewBox="0 0 12 10"><path d="M1 5L4.2 8.4L11 1.2" fill="none" stroke="#2ca02c" stroke-width="1.3"/></svg>
<span class="t" style="left:907.5px;top:674.0px;height:18px;line-height:18px;font-size:12px;color:#222;transform:scaleX(0.794);">オプション...</span>
<div class="a" style="left:0px;top:35px;width:1px;height:680px;background:#2b579a;"></div>
<div class="a" style="left:1022px;top:35px;width:1px;height:680px;background:#2b579a;"></div>
<div class="a" style="left:0px;top:714px;width:1023px;height:1px;background:#2b579a;"></div>
</body></html>
